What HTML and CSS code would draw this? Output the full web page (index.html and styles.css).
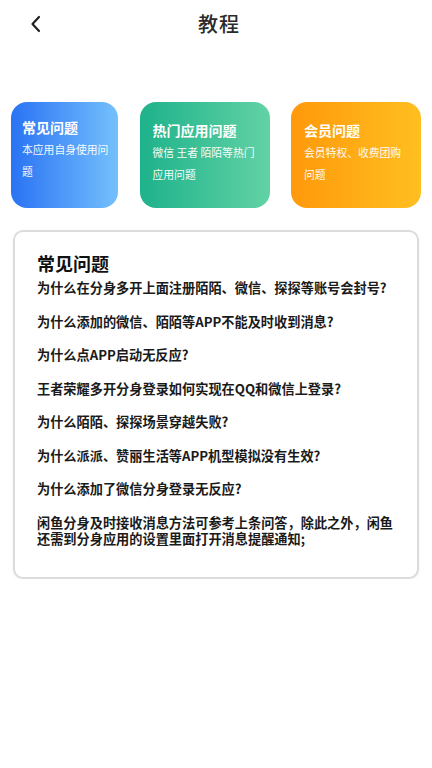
FILE: index.html
```html
<!DOCTYPE html>
<html lang="zh">
<head>
    <meta charset="UTF-8">
    <title>教程</title>
    <link rel="stylesheet" href="styles.css">
</head>
<body>
    <div class="header">
        <a class="back" href="#">
            <svg width="12" height="18" viewBox="0 0 12 18">
                <path d="M9 2 L2.5 9 L9 16" fill="none" stroke="#222" stroke-width="2.2" stroke-linecap="round" stroke-linejoin="round"/>
            </svg>
        </a>
        <h1>教程</h1>
    </div>

    <div class="tabs">
        <div class="tab tab-blue">
            <div class="tab-title">常见问题</div>
            <div class="tab-desc">本应用自身使用问题</div>
        </div>
        <div class="tab tab-green">
            <div class="tab-title">热门应用问题</div>
            <div class="tab-desc">微信 王者 陌陌等热门应用问题</div>
        </div>
        <div class="tab tab-orange">
            <div class="tab-title">会员问题</div>
            <div class="tab-desc">会员特权、收费团购问题</div>
        </div>
    </div>

    <div class="faq">
        <h2>常见问题</h2>
        <p>为什么在分身多开上面注册陌陌、微信、探探等账号会封号?</p>
        <p>为什么添加的微信、陌陌等APP不能及时收到消息?</p>
        <p>为什么点APP启动无反应?</p>
        <p>王者荣耀多开分身登录如何实现在QQ和微信上登录?</p>
        <p>为什么陌陌、探探场景穿越失败?</p>
        <p>为什么派派、赞丽生活等APP机型模拟没有生效?</p>
        <p>为什么添加了微信分身登录无反应?</p>
        <p>闲鱼分身及时接收消息方法可参考上条问答，除此之外，闲鱼还需到分身应用的设置里面打开消息提醒通知;</p>
    </div>
</body>
</html>
```

FILE: styles.css
```css
body {
    font-family: 'Noto Sans CJK SC', 'Noto Sans', sans-serif;
    margin: 0;
    background-color: #fff;
    color: #222;
}

.header {
    position: relative;
    height: 46px;
    display: flex;
    align-items: center;
    justify-content: center;
    padding-left: 6px;
}

.back {
    position: absolute;
    left: 30px;
    top: 14px;
    display: block;
    width: 12px;
    height: 18px;
}

.header h1 {
    margin: 0;
    font-size: 20px;
    font-weight: 500;
    color: #2a2a2a;
    letter-spacing: 1px;
}

.tabs {
    display: flex;
    justify-content: space-between;
    padding: 56px 11px 0 11px;
}

.tab {
    height: 106px;
    border-radius: 16px;
    box-sizing: border-box;
    padding: 18px 12px 0 13px;
    color: #fff;
}

.tab-blue {
    width: 107px;
    padding: 15px 8px 0 11px;
    background: linear-gradient(to right, #2a73f4, #74c0fc);
}

.tab-green {
    width: 130px;
    background: linear-gradient(to right, #1eb28b, #62d2a5);
}

.tab-orange {
    width: 130px;
    background: linear-gradient(to right, #ff990b, #ffbf20);
}

.tab-title {
    font-size: 14px;
    font-weight: bold;
    line-height: 20px;
}

.tab-desc {
    font-size: 10.8px;
    line-height: 22px;
    margin-top: 1px;
    opacity: 0.95;
}

.faq {
    margin: 22px 13px 0 13px;
    border: 2px solid #dcdcdc;
    border-radius: 10px;
    padding: 18px 20px 29px 22px;
    box-shadow: 0 1px 3px rgba(0, 0, 0, 0.06);
}

.faq h2 {
    margin: 0 0 4px 0;
    font-size: 18px;
    font-weight: bold;
    line-height: 26px;
    color: #111;
}

.faq p {
    margin: 0 0 17px 0;
    font-size: 13.2px;
    font-weight: bold;
    line-height: 16.5px;
    color: #1a1a1a;
}

.faq p:last-child {
    margin-bottom: 0;
}
```
